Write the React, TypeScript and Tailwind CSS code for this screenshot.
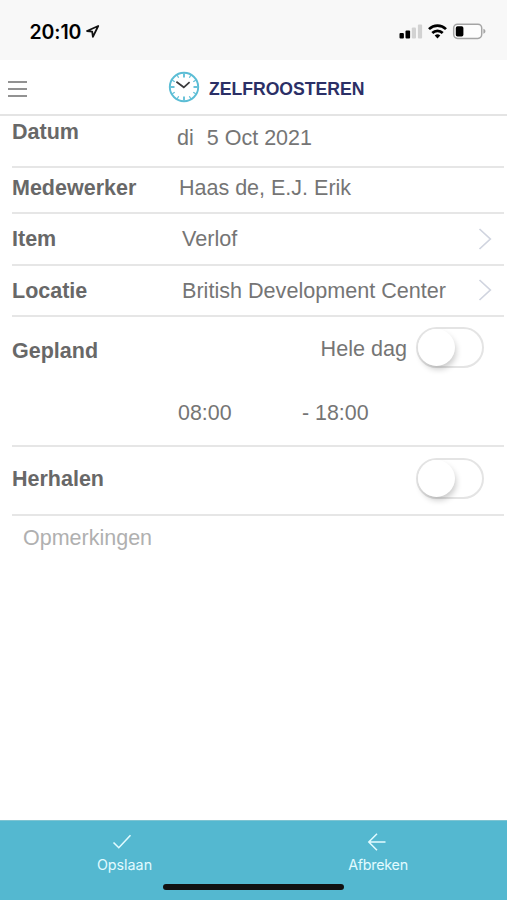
import React from "react";

const ARIAL = "font-['Liberation_Sans',Arial,sans-serif]";

function StatusBar() {
  return (
    <div className="flex h-[60px] shrink-0 items-center justify-between bg-[#f8f8f8] pt-[3px] pr-[20px] pl-[29.5px] font-['Inter',sans-serif]">
      <div className="flex items-center gap-[5px]">
        <span className="text-[19.5px] leading-6 font-semibold tracking-[-0.1px] text-black">20:10</span>
        <svg width="14" height="14" viewBox="0 0 14 14" fill="none" stroke="#111" strokeWidth="1.8" strokeLinejoin="round">
          <path d="M12.2 1 1 6l5.2.7.7 5.1z" />
        </svg>
      </div>
      <svg width="88" height="18" viewBox="0 0 88 18">
        <rect x="0.5" y="10" width="4.4" height="5.4" rx="1" fill="#000" />
        <rect x="6.5" y="7.4" width="4.6" height="8" rx="1" fill="#000" />
        <rect x="12.8" y="4.4" width="4.2" height="11" rx="1" fill="#d2d2d2" />
        <rect x="18.9" y="1.4" width="4.2" height="14" rx="1" fill="#d2d2d2" />
        <g fill="none" stroke="#000" strokeWidth="2.7">
          <path d="M30 6.1a12.2 12.2 0 0 1 17 0" />
          <path d="M33.3 10a7.4 7.4 0 0 1 10.4 0" />
        </g>
        <path d="M35.7 12.6a4 4 0 0 1 5.6 0l-2.8 2.9z" fill="#000" />
        <rect x="54.7" y="1.2" width="28" height="14.2" rx="3.8" fill="#fdfdfd" stroke="#a5a5a5" strokeWidth="1.5" />
        <rect x="56.8" y="3.2" width="7.6" height="10.2" rx="1.7" fill="#000" />
        <path d="M84.4 5.8c2.7.8 2.7 4.2 0 5z" fill="#a5a5a5" />
      </svg>
    </div>
  );
}

function ClockLogo() {
  const ticks = [0, 30, 60, 90, 120, 150, 180, 210, 240, 270, 300, 330];
  return (
    <svg width="32" height="32" viewBox="0 0 32 32" fill="none">
      <circle cx="16" cy="16" r="14.2" stroke="#5bbdd5" strokeWidth="1.9" />
      {ticks.map((angle) => (
        <path
          key={angle}
          d={angle % 90 === 0 ? "M16 2.5v4" : "M16 2.5v2.8"}
          stroke="#5bbdd5"
          strokeWidth={angle % 90 === 0 ? 1.8 : 1.2}
          transform={`rotate(${angle} 16 16)`}
        />
      ))}
      <path d="m8.4 10.8 7.4 5.5 5.8-5.2" stroke="#3a3a3c" strokeWidth="1.7" />
    </svg>
  );
}

function Header() {
  return (
    <header className="flex h-[56px] shrink-0 items-center border-b-2 border-[#e4e4e4] pl-[8px]">
      <button className="flex w-[19px] flex-col gap-[5px] pt-[3px]" aria-label="Menu">
        <span className="h-[2px] bg-[#929292]" />
        <span className="h-[2px] bg-[#929292]" />
        <span className="h-[2px] bg-[#929292]" />
      </button>
      <div className="ml-[141px] flex items-center gap-[9px]">
        <ClockLogo />
        <h1 className="pt-[4px] text-[17.6px] leading-5 font-bold text-[#2b2f66]">ZELFROOSTEREN</h1>
      </div>
    </header>
  );
}

function Chevron() {
  return (
    <svg className="-mt-px mr-[12px] ml-auto" width="14" height="22" viewBox="0 0 14 22" fill="none" stroke="#d0d4df" strokeWidth="1.7">
      <path d="m1.5 1 10.8 10L1.5 21" />
    </svg>
  );
}

function Toggle() {
  return (
    <span className="flex h-[41px] w-[68px] rounded-full border-2 border-[#e4e4e4] bg-white">
      <span className="size-[37px] rounded-full bg-white shadow-[2px_4px_6px_-1px_rgba(0,0,0,0.22)]" />
    </span>
  );
}

const label = "w-[165px] shrink-0 text-[21.5px] font-bold text-[#686868]";
const row = "flex border-b-2 border-[#e6e6e6]";

export default function App() {
  return (
    <div className={`flex h-[900px] w-[507px] flex-col overflow-hidden bg-white ${ARIAL}`}>
      <StatusBar />
      <Header />
      <main className="flex-1 pr-[3px] pl-[12px] text-[21.6px] leading-[26px] text-[#757575]">
        <div className={`${row} h-[52px]`}>
          <span className={`${label} pt-[3px]`}>Datum</span>
          <span className="pt-[9px]">di</span>
          <span className="pt-[9px] pl-[13px] text-[21.5px]">5 Oct 2021</span>
        </div>
        <div className={`${row} h-[46px] items-center`}>
          <span className={`${label} -mt-[4px]`}>Medewerker</span>
          <span className="-mt-[4px] pl-[2px] text-[21.5px]">Haas de, E.J. Erik</span>
        </div>
        <div className={`${row} h-[52px] items-center`}>
          <span className={label}>Item</span>
          <span className="pl-[5px]">Verlof</span>
          <Chevron />
        </div>
        <div className={`${row} h-[51px] items-center`}>
          <span className={label}>Locatie</span>
          <span className="pl-[5px]">British Development Center</span>
          <Chevron />
        </div>
        <div className={`${row} h-[130px] flex-col`}>
          <div className="flex h-[63px] items-center pr-[20px]">
            <span className={`${label} mt-[4px]`}>Gepland</span>
            <span className="mt-px mr-[9px] ml-auto">Hele dag</span>
            <span className="-mt-[2px]"><Toggle /></span>
          </div>
          <div className="flex pt-[20px] pl-[166px] text-[21.4px]">
            <span className="w-[124px]">08:00</span>
            <span>- 18:00</span>
          </div>
        </div>
        <div className={`${row} h-[69px] items-center justify-between pr-[20px]`}>
          <span className={`${label} -mt-[3px]`}>Herhalen</span>
          <span className="-mt-[4px]"><Toggle /></span>
        </div>
        <div className="pt-[9px] pl-[11px] text-[21.5px] text-[#b0b0b0]">Opmerkingen</div>
      </main>
      <footer className="flex h-[80px] shrink-0 flex-col items-center border-t border-[#7ec4d2] bg-[#54b8d0] font-['Inter',sans-serif] text-[14.3px] leading-5 text-[#e2fbff]">
        <div className="flex h-[66px] w-full">
          <button className="flex w-[249px] flex-col items-center pt-[11px]">
            <svg className="mr-[5px]" width="20" height="20" viewBox="0 0 20 20" fill="none" stroke="currentColor" strokeWidth="1.6">
              <path d="m1.5 10.5 5.3 5.2L18.5 3.3" />
            </svg>
            <span className="mt-[3px]">Opslaan</span>
          </button>
          <button className="flex flex-1 flex-col items-center pt-[11px]">
            <svg className="mr-[3px]" width="20" height="20" viewBox="0 0 20 20" fill="none" stroke="currentColor" strokeWidth="1.5">
              <path d="M18.5 10H2M10 1.8 1.8 10l8.2 8.2" />
            </svg>
            <span className="mt-[3px] tracking-[-0.25px]">Afbreken</span>
          </button>
        </div>
        <div className="-mt-[3px] h-[6px] w-[181px] rounded-full bg-[#111]" />
      </footer>
    </div>
  );
}
